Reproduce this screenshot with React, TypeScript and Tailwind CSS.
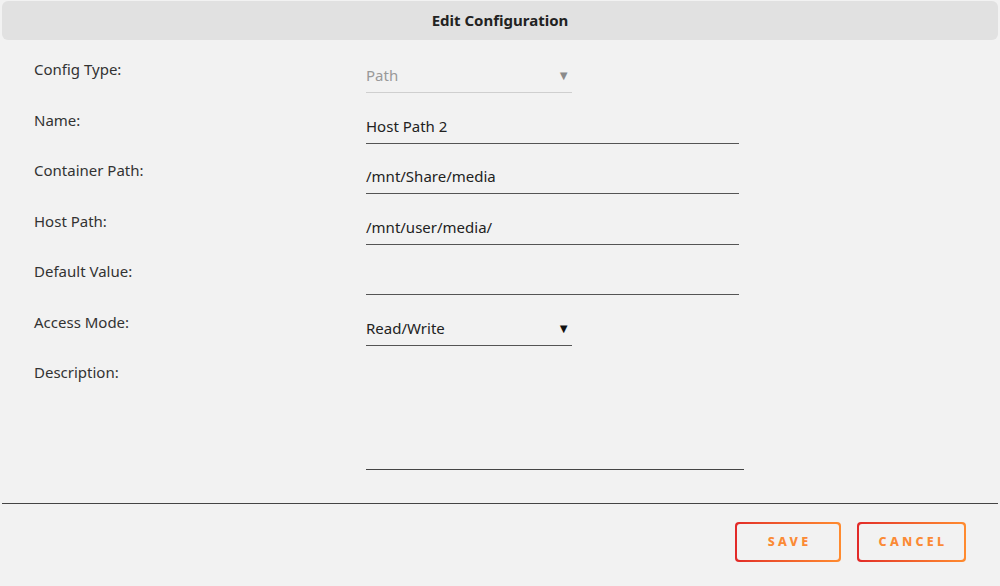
import React from "react";

const font = { fontFamily: '"Noto Sans", "Open Sans", sans-serif' };

function Row({ label, children, tall }: { label: string; children?: React.ReactNode; tall?: boolean }) {
  return (
    <div className={`flex ${tall ? "h-[110px]" : "h-[50.5px]"}`}>
      <div className="w-[366px] shrink-0 pl-[34px] text-[15px] leading-[22px] text-[#333]">{label}</div>
      <div className="flex-1">{children}</div>
    </div>
  );
}

function TextInput({ value }: { value: string }) {
  return (
    <div className="mt-[6px] w-[373px] border-b border-[#555] pb-[5px] text-[15px] leading-[23px] text-[#222]">
      {value || "\u00a0"}
    </div>
  );
}

function Select({ value, disabled }: { value: string; disabled?: boolean }) {
  return (
    <div
      className={`mt-[6px] flex w-[206px] items-center justify-between border-b pb-[5px] text-[15px] leading-[23px] ${
        disabled ? "border-[#cfcfcf] text-[#999]" : "border-[#555] text-[#222]"
      }`}
    >
      <span>{value}</span>
      <span className={`pr-[2px] text-[13px] ${disabled ? "text-[#8a8a8a]" : "text-[#111]"}`}>▼</span>
    </div>
  );
}

function GradientButton({ label, width }: { label: string; width: string }) {
  return (
    <div className={`h-[40px] ${width} rounded-[4px] bg-gradient-to-r from-[#e22828] to-[#ff8b2f] p-[2px]`}>
      <div className="flex h-full w-full items-center justify-center rounded-[3px] bg-[#f2f2f2] pl-[3px] text-[12.5px] font-extrabold tracking-[0.26em] text-[#fb8a35]">
        {label}
      </div>
    </div>
  );
}

export default function App() {
  return (
    <div className="flex h-[586px] w-[1000px] flex-col bg-[#f2f2f2]" style={font}>
      <div className="mx-[2px] mt-[1px] flex h-[39px] items-center justify-center rounded-[6px] bg-[#e1e1e1] text-[15px] font-bold text-[#222]">
        Edit Configuration
      </div>

      <div className="h-[463px] pt-[18px]">
        <Row label="Config Type:">
          <Select value="Path" disabled />
        </Row>
        <Row label="Name:">
          <TextInput value="Host Path 2" />
        </Row>
        <Row label="Container Path:">
          <TextInput value="/mnt/Share/media" />
        </Row>
        <Row label="Host Path:">
          <TextInput value="/mnt/user/media/" />
        </Row>
        <Row label="Default Value:">
          <TextInput value="" />
        </Row>
        <Row label="Access Mode:">
          <Select value="Read/Write" />
        </Row>
        <Row label="Description:" tall>
          <div className="mt-[6px] h-[103px] w-[378px] border-b border-[#444]" />
        </Row>
      </div>

      <div className="mx-[2px] h-px bg-[#444]" />

      <div className="flex justify-end gap-[16px] pr-[34px] pt-[18px]">
        <GradientButton label="SAVE" width="w-[106px]" />
        <GradientButton label="CANCEL" width="w-[109px]" />
      </div>
    </div>
  );
}
